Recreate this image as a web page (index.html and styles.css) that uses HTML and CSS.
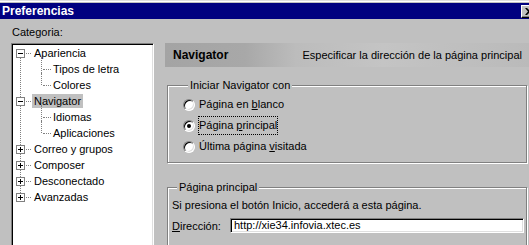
FILE: index.html
```html
<!DOCTYPE html>
<html lang="es">
<head>
  <meta charset="UTF-8" />
  <title>Preferencias</title>
  <link rel="stylesheet" href="styles.css">
</head>
<body>
  <div class="window">
    <div class="titlebar">
      <span class="title">Preferencias</span>
      <span class="close">
        <svg width="8" height="7" viewBox="0 0 8 7"><path d="M0 0h2l2 2 2-2h2L5 3.5 8 7H6L4 5 2 7H0l3-3.5z" fill="#000"/></svg>
      </span>
    </div>

    <div class="content">
      <div class="left">
        <div class="caption">Categoria:</div>
        <div class="treebox">
          <ul class="tree">
            <li class="root">
              <div class="row"><span class="exp open"></span><span class="conn"></span><span class="label">Apariencia</span></div>
              <ul class="sub">
                <li><div class="row"><span class="label">Tipos de letra</span></div></li>
                <li class="last"><div class="row"><span class="label">Colores</span></div></li>
              </ul>
            </li>
            <li class="root">
              <div class="row"><span class="exp open"></span><span class="conn"></span><span class="label selected">Navigator</span></div>
              <ul class="sub">
                <li><div class="row"><span class="label">Idiomas</span></div></li>
                <li class="last"><div class="row"><span class="label">Aplicaciones</span></div></li>
              </ul>
            </li>
            <li class="root">
              <div class="row"><span class="exp"></span><span class="conn"></span><span class="label">Correo y grupos</span></div>
            </li>
            <li class="root">
              <div class="row"><span class="exp"></span><span class="conn"></span><span class="label">Composer</span></div>
            </li>
            <li class="root">
              <div class="row"><span class="exp"></span><span class="conn"></span><span class="label">Desconectado</span></div>
            </li>
            <li class="root last">
              <div class="row"><span class="exp"></span><span class="conn"></span><span class="label">Avanzadas</span></div>
            </li>
          </ul>
        </div>
      </div>

      <div class="right">
        <div class="band">
          <span class="band-title">Navigator</span>
          <span class="band-desc">Especificar la dirección de la página principal</span>
        </div>

        <fieldset class="group group-start">
          <legend>Iniciar Navigator con</legend>
          <div class="radio-row">
            <span class="radio"></span>
            <span class="radio-label">Página en <u>b</u>lanco</span>
          </div>
          <div class="radio-row">
            <span class="radio checked"></span>
            <span class="radio-label focused">Página <u>p</u>rincipal</span>
          </div>
          <div class="radio-row">
            <span class="radio"></span>
            <span class="radio-label">Última página <u>v</u>isitada</span>
          </div>
        </fieldset>

        <fieldset class="group group-home">
          <legend>Página principal</legend>
          <div class="hint">Si presiona el botón Inicio, accederá a esta página.</div>
          <div class="field-row">
            <span class="field-label"><u>D</u>irección:</span>
            <span class="textbox">http://xie34.infovia.xtec.es</span>
          </div>
        </fieldset>
      </div>
    </div>
  </div>
</body>
</html>
```

FILE: styles.css
```css
html, body {
  margin: 0;
  padding: 0;
  background: #c0c0c0;
  font-family: 'Liberation Sans', Arial, sans-serif;
  font-size: 11px;
  color: #000;
  overflow: hidden;
}
.window {
  width: 529px;
  height: 245px;
  overflow: hidden;
  box-sizing: border-box;
  padding-top: 3px;
  background: linear-gradient(#dfdfdf 0 1px, #ffffff 1px 2px, #c0c0c0 2px);
}
.titlebar {
  height: 16px;
  background: #000080;
  color: #fff;
  display: flex;
  align-items: center;
  justify-content: space-between;
  padding-left: 2px;
}
.title {
  font-weight: bold;
  font-size: 12px;
}
.close {
  width: 14px;
  height: 11px;
  margin-right: -8px;
  background: #c0c0c0;
  border: 1px solid;
  border-color: #fff #000 #000 #fff;
  box-shadow: inset -1px -1px 0 #808080;
  display: flex;
  align-items: center;
  justify-content: center;
}

.content {
  display: flex;
  padding-left: 11px;
}
.left {
  width: 143px;
}
.caption {
  margin-top: 7px;
  padding-left: 1px;
  line-height: 13px;
  height: 13px;
}
.treebox {
  margin-top: 4px;
  height: 220px;
  background: #fff;
  border: 1px solid;
  border-color: #808080 #fff #fff #808080;
  box-shadow: inset 1px 1px 0 #000, inset -1px -1px 0 #dfdfdf;
  padding: 1px;
}
.tree, .sub {
  list-style: none;
  margin: 0;
  padding: 0;
}
.tree li {
  position: relative;
}
.row {
  height: 16px;
  display: flex;
  align-items: center;
}
.root::before {
  content: "";
  position: absolute;
  left: 7px;
  top: 8px;
  bottom: -8px;
  border-left: 1px dotted #808080;
}
.root.last::before {
  display: none;
}
.exp {
  position: relative;
  z-index: 1;
  width: 7px;
  height: 7px;
  margin-left: 3px;
  margin-top: 1px;
  border: 1px solid #808080;
  background: #fff;
}
.exp::before {
  content: "";
  position: absolute;
  left: 1px;
  top: 3px;
  width: 5px;
  height: 1px;
  background: #000;
}
.exp:not(.open)::after {
  content: "";
  position: absolute;
  left: 3px;
  top: 1px;
  width: 1px;
  height: 5px;
  background: #000;
}
.conn {
  width: 5px;
  margin-left: 1px;
  margin-right: 1px;
  border-top: 1px dotted #808080;
}
.label {
  padding: 0 2px;
  line-height: 14px;
}
.label.selected {
  background: #c0c0c0;
}
.sub .row {
  padding-left: 38px;
}
.sub li::before {
  content: "";
  position: absolute;
  left: 28px;
  top: -4px;
  bottom: 0;
  border-left: 1px dotted #808080;
}
.sub li.last::before {
  bottom: 8px;
}
.sub li::after {
  content: "";
  position: absolute;
  left: 30px;
  top: 8px;
  width: 8px;
  border-top: 1px dotted #808080;
}

.right {
  margin-left: 11px;
  width: 364px;
  flex-shrink: 0;
  padding-top: 24px;
}
.band {
  height: 24px;
  display: flex;
  align-items: center;
  justify-content: space-between;
  padding: 0 7px 0 8px;
  background: linear-gradient(to right, #a4a4a4 0, #a8a8a8 22%, #bcbcbc 36%, #c4c4c4 60%, #bababa 100%);
}
.band-title {
  font-weight: bold;
  font-size: 12px;
}

.group {
  margin: 0 2px;
  padding: 0;
  border: 1px solid #808080;
  box-shadow: 1px 1px 0 #fff, inset 1px 1px 0 #fff;
  min-width: 0;
}
.group legend {
  margin-left: 5px;
  padding: 0 2px;
  line-height: 13px;
  background: #c0c0c0;
}
.group-start {
  margin-top: 12px;
  height: 78px;
  padding: 4px 0 0 15px;
  display: flex;
  flex-direction: column;
  gap: 4px;
}
.radio-row {
  height: 17px;
  display: flex;
  align-items: center;
}
.radio {
  position: relative;
  box-sizing: border-box;
  width: 12px;
  height: 12px;
  border-radius: 50%;
  background: #fff;
  border: 1px solid;
  border-color: #808080 #fff #fff #808080;
  box-shadow: inset 1px 1px 0 #000, inset -1px -1px 0 #dfdfdf;
}
.radio.checked::after {
  content: "";
  position: absolute;
  left: 3px;
  top: 3px;
  width: 4px;
  height: 4px;
  border-radius: 50%;
  background: #000;
}
.radio-label {
  margin-left: 3px;
  line-height: 17px;
  border: 1px dotted transparent;
}
.radio-label.focused {
  border-color: #000;
}

.group-home {
  margin-top: 18px;
  height: 80px;
  padding: 5px 2px 0 4px;
}
.hint {
  line-height: 13px;
}
.field-row {
  display: flex;
  align-items: center;
  margin-top: 6px;
}
.field-label {
  width: 58px;
}
.textbox {
  flex: 1;
  height: 13px;
  line-height: 13px;
  padding: 0 1px;
  background: #fff;
  border: 1px solid;
  border-color: #808080 #fff #fff #808080;
  box-shadow: inset 1px 1px 0 #000, inset -1px -1px 0 #dfdfdf;
  padding-left: 3px;
}
```
